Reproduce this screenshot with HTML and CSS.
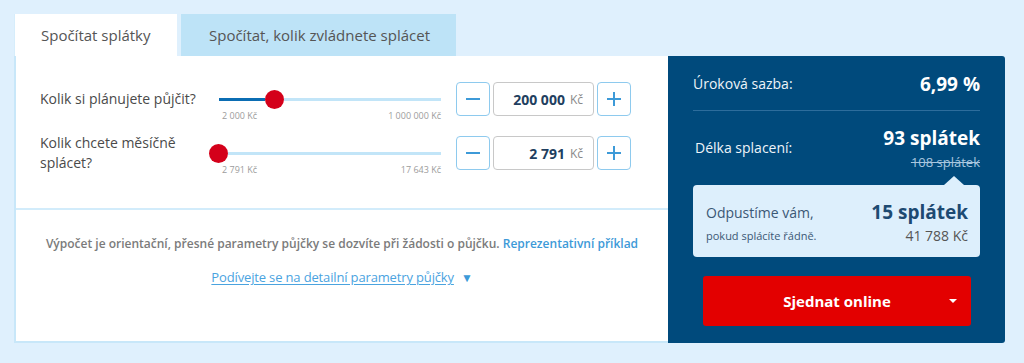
FILE: index.html
```html
<!DOCTYPE html>
<html lang="cs">
<head>
<meta charset="utf-8">
<title>Kalkulačka půjčky</title>
<link rel="stylesheet" href="styles.css">
</head>
<body>
<div class="calc">
  <div class="tabs">
    <div class="tab tab-active">Spočítat splátky</div>
    <div class="tab tab-other">Spočítat, kolik zvládnete splácet</div>
  </div>
  <div class="body">
    <div class="left">
      <div class="inputs">
        <div class="row">
          <div class="label">Kolik si plánujete půjčit?</div>
          <div class="slider">
            <div class="fill" style="width:46px"></div>
            <div class="thumb"></div>
            <div class="rest"></div>
          </div>
          <div class="stepper">
            <div class="btn"><span class="minus"></span></div>
            <div class="field"><b>200 000</b><span class="cur">Kč</span></div>
            <div class="btn"><span class="plus"></span></div>
          </div>
          <div class="range"><span>2 000 Kč</span><span>1 000 000 Kč</span></div>
        </div>
        <div class="row">
          <div class="label">Kolik chcete měsíčně splácet?</div>
          <div class="slider">
            <div class="thumb thumb-start"></div>
            <div class="rest"></div>
          </div>
          <div class="stepper">
            <div class="btn"><span class="minus"></span></div>
            <div class="field"><b>2 791</b><span class="cur">Kč</span></div>
            <div class="btn"><span class="plus"></span></div>
          </div>
          <div class="range"><span>2 791 Kč</span><span>17 643 Kč</span></div>
        </div>
      </div>
      <div class="info">
        <p class="note">Výpočet je orientační, přesné parametry půjčky se dozvíte při žádosti o půjčku. <a class="example">Reprezentativní příklad</a></p>
        <p class="details"><a class="details-link">Podívejte se na detailní parametry půjčky</a><span class="tri">▼</span></p>
      </div>
    </div>
    <div class="right">
      <div class="rate">
        <span class="r-label">Úroková sazba:</span>
        <span class="r-big">6,99 %</span>
      </div>
      <div class="term">
        <span class="r-label">Délka splacení:</span>
        <div class="term-vals">
          <span class="r-big">93 splátek</span>
          <span class="old">108 splátek</span>
        </div>
      </div>
      <div class="bonus">
        <div class="bonus-row">
          <span class="b-text">Odpustíme vám,</span>
          <span class="b-big">15 splátek</span>
        </div>
        <div class="bonus-row bonus-row2">
          <span class="b-small">pokud splácíte řádně.</span>
          <span class="b-sum">41 788 Kč</span>
        </div>
      </div>
      <div class="cta">
        <span>Sjednat online</span>
        <span class="caret"></span>
      </div>
    </div>
  </div>
</div>
</body>
</html>
```
FILE: styles.css
```css
* { box-sizing: border-box; }
html, body { margin: 0; padding: 0; }
body {
  background: #dff0fd;
  font-family: "Open Sans", "Noto Sans", sans-serif;
  color: #4a4a4a;
  height: 363px;
  overflow: hidden;
}
.calc {
  margin: 14px 0 0 14px;
  width: 991px;
}
.tabs {
  display: flex;
  gap: 4px;
  height: 42px;
}
.tab {
  display: flex;
  align-items: center;
  font-size: 15px;
  color: #555;
}
.tab-active {
  width: 163px;
  background: #fff;
  padding-left: 26px;
  border-left: 1px solid #d6edfb;
}
.tab-other {
  width: 275px;
  background: #bde3f7;
  justify-content: center;
  padding-left: 2px;
}
.body {
  display: flex;
}
.left {
  width: 654px;
  background: #fff;
  border-left: 2px solid #c8e7f9;
  border-bottom: 2px solid #c8e7f9;
  height: 287px;
}
.inputs {
  padding: 26px 0 32px 24px;
  display: flex;
  flex-direction: column;
  gap: 14px;
  border-bottom: 2px solid #d2ecfb;
}
.row {
  display: grid;
  grid-template-columns: 164px 222px 175px;
  grid-template-rows: 34px auto;
  column-gap: 15px;
}
.label {
  grid-row: 1;
  grid-column: 1;
  align-self: center;
  font-size: 14px;
  line-height: 20px;
  color: #4a4a4a;
}
.slider {
  grid-row: 1;
  grid-column: 2;
  display: flex;
  align-items: center;
}
.fill {
  height: 3px;
  background: #0b6db3;
}
.rest {
  flex: 1;
  height: 3px;
  background: #c2e5f8;
}
.thumb {
  width: 19px;
  height: 19px;
  border-radius: 50%;
  background: #d4001a;
  flex: none;
}
.thumb-start {
  margin-left: -10px;
}
.range {
  grid-row: 2;
  grid-column: 2;
  display: flex;
  justify-content: space-between;
  font-size: 9px;
  line-height: 12px;
  color: #9c9c9c;
  margin-top: -6px;
  padding-left: 3px;
}
.stepper {
  grid-row: 1;
  grid-column: 3;
  display: flex;
  gap: 3px;
}
.btn {
  width: 34px;
  height: 34px;
  border: 1px solid #8ecaee;
  border-radius: 4px;
  display: flex;
  align-items: center;
  justify-content: center;
}
.minus, .plus {
  position: relative;
  width: 14px;
  height: 14px;
}
.minus::before, .plus::before, .plus::after {
  content: "";
  position: absolute;
  background: #3d9ad8;
}
.minus::before, .plus::before {
  left: 0;
  top: 6px;
  width: 14px;
  height: 2px;
}
.plus::after {
  left: 6px;
  top: 0;
  width: 2px;
  height: 14px;
}
.field {
  width: 101px;
  height: 34px;
  border: 1px solid #c8c8c8;
  border-radius: 4px;
  display: flex;
  align-items: center;
  justify-content: flex-end;
  padding-right: 10px;
  gap: 5px;
}
.field b {
  font-size: 14px;
  font-weight: 700;
  color: #1f3f60;
}
.cur {
  font-size: 12px;
  color: #8a8a8a;
}
.info {
  text-align: center;
  padding-top: 25px;
}
.note {
  margin: 0;
  font-size: 12px;
  line-height: 18px;
  font-weight: 600;
  color: #7b7b7b;
}
.example {
  color: #3d9ad8;
}
.details {
  margin: 15px 0 0;
  font-size: 13px;
  line-height: 18px;
  color: #4aa3df;
  letter-spacing: -0.15px;
}
.details-link {
  text-decoration: underline;
  text-underline-offset: 2px;
}
.tri {
  font-size: 12px;
  margin-left: 7px;
  color: #3d9ad8;
}
.right {
  width: 337px;
  height: 287px;
  background: #004a7c;
  border-radius: 0 3px 3px 0;
  padding: 0 25px 17px 25px;
  color: #fff;
}
.rate {
  display: flex;
  justify-content: space-between;
  align-items: center;
  padding: 16px 0 14px;
  border-bottom: 1px solid #2d6d9c;
}
.r-label {
  font-size: 14px;
  line-height: 24px;
  color: #eef4f9;
}
.r-big {
  font-size: 19px;
  line-height: 24px;
  font-weight: 700;
}
.term {
  display: flex;
  justify-content: space-between;
  align-items: center;
  padding-top: 15px;
  padding-left: 2px;
}
.term-vals {
  display: flex;
  flex-direction: column;
  align-items: flex-end;
}
.old {
  margin-top: 4px;
  font-size: 13px;
  line-height: 16px;
  color: #a8c6df;
  text-decoration: line-through;
}
.bonus {
  position: relative;
  margin-top: 15px;
  background: #ddeffc;
  border-radius: 4px;
  padding: 14px 12px 11px 13px;
  height: 72px;
}
.bonus::before {
  content: "";
  position: absolute;
  right: 16px;
  top: -9px;
  width: 0;
  height: 0;
  border-left: 10px solid transparent;
  border-right: 10px solid transparent;
  border-bottom: 9px solid #ddeffc;
}
.bonus-row {
  display: flex;
  justify-content: space-between;
  align-items: center;
  height: 26px;
}
.bonus-row2 {
  height: 20px;
}
.b-text {
  font-size: 14px;
  color: #3b5875;
}
.b-big {
  font-size: 19px;
  font-weight: 700;
  color: #1d4a72;
}
.b-small {
  font-size: 11px;
  color: #3b5875;
}
.b-sum {
  font-size: 14px;
  color: #555;
}
.cta {
  position: relative;
  margin: 19px 9px 0 10px;
  height: 50px;
  background: #e30000;
  border-radius: 3px;
  display: flex;
  align-items: center;
  justify-content: center;
  font-size: 15px;
  font-weight: 700;
  color: #fff;
}
.caret {
  position: absolute;
  right: 14px;
  top: 23px;
  width: 0;
  height: 0;
  border-left: 4px solid transparent;
  border-right: 4px solid transparent;
  border-top: 4px solid #fff;
}
```
